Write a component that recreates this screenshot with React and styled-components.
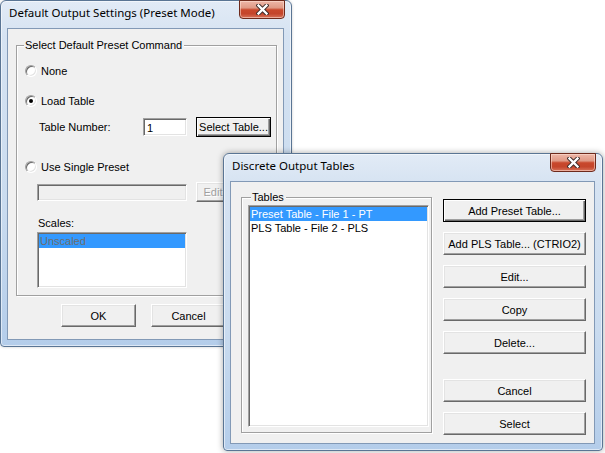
import styled, { createGlobalStyle } from "styled-components";

const GlobalStyle = createGlobalStyle`
  html, body {
    margin: 0;
    padding: 0;
    background: #ffffff;
  }
  body {
    width: 605px;
    height: 453px;
    overflow: hidden;
    font-family: "Liberation Sans", Arial, sans-serif;
    font-size: 11px;
    color: #000;
  }
`;

const Desktop = styled.div`
  position: relative;
  width: 605px;
  height: 453px;
  background: #ffffff;
  overflow: hidden;
`;

/* windows sit on a free desktop, so they are placed by coordinates */
const Window = styled.div`
  position: absolute;
  left: ${(p) => p.$left}px;
  top: ${(p) => p.$top}px;
  width: ${(p) => p.$w}px;
  height: ${(p) => p.$h}px;
  z-index: ${(p) => p.$z};
  box-sizing: border-box;
  display: flex;
  flex-direction: column;
  padding: 0 7px 6px 6px;
  border: 1px solid #5a7594;
  border-radius: 6px 6px 4px 4px;
  background: linear-gradient(
    180deg,
    #e2ebf6 0%,
    #d6e3f2 10%,
    #c9dbef 60%,
    #b4cdea 100%
  );
  box-shadow: inset 0 0 0 1px rgba(255, 255, 255, 0.55),
    ${(p) => (p.$active ? "0 0 6px rgba(0, 0, 0, 0.35)" : "0 0 3px rgba(0, 0, 0, 0.2)")};
`;

const TitleBar = styled.div`
  height: 27px;
  flex-shrink: 0;
  display: flex;
  align-items: flex-start;
  justify-content: space-between;
`;

const Title = styled.div`
  margin-top: 4px;
  padding-left: 2px;
  font-family: "Noto Sans", "Liberation Sans", sans-serif;
  font-size: 11.5px;
  line-height: 16px;
  color: #000;
  white-space: nowrap;
`;

const CloseButton = styled.div`
  box-sizing: border-box;
  width: 46px;
  height: 19px;
  margin-top: -1px;
  margin-right: -1px;
  display: flex;
  align-items: center;
  justify-content: center;
  border: 1px solid #6e2a1c;
  border-radius: 0 0 4px 4px;
  background: linear-gradient(
    180deg,
    #eeb7a8 0%,
    #e09a86 40%,
    #c9482c 52%,
    #c4452b 75%,
    #d8735a 100%
  );
  box-shadow: inset 0 0 0 1px rgba(255, 225, 215, 0.55);
`;

const CloseGlyph = () => (
  <svg width="13" height="11" viewBox="0 0 13 11">
    <path
      d="M2.5 1.5 L10.5 9.5 M10.5 1.5 L2.5 9.5"
      stroke="#3b2a28"
      strokeWidth="4.2"
      strokeLinecap="square"
      fill="none"
    />
    <path
      d="M2.5 1.5 L10.5 9.5 M10.5 1.5 L2.5 9.5"
      stroke="#ffffff"
      strokeWidth="2.4"
      strokeLinecap="square"
      fill="none"
    />
  </svg>
);

const Client = styled.div`
  flex: 1;
  display: flex;
  flex-direction: ${(p) => (p.$row ? "row" : "column")};
  align-items: flex-start;
  background: #f0f0f0;
  border: 1px solid #8299b6;
  overflow: hidden;
`;

const GroupBox = styled.div`
  position: relative;
  flex-shrink: 0;
  box-sizing: border-box;
  width: ${(p) => p.$w}px;
  height: ${(p) => p.$h}px;
  margin-left: ${(p) => p.$ml}px;
  margin-top: ${(p) => p.$mt}px;
  display: flex;
  flex-direction: column;
  border: 1px solid #a0a0a0;
  box-shadow: inset 1px 1px 0 #ffffff, 1px 1px 0 #ffffff;
`;

const Legend = styled.span`
  position: absolute;
  top: -7px;
  left: ${(p) => p.$left}px;
  padding: 0 2px 0 1px;
  line-height: 13px;
  background: #f0f0f0;
  white-space: nowrap;
`;

const Row = styled.div`
  display: flex;
  align-items: center;
  height: ${(p) => p.$h}px;
  margin-top: ${(p) => p.$mt}px;
  padding-left: ${(p) => p.$pl}px;
  white-space: nowrap;
`;

const RadioDot = styled.span`
  position: relative;
  flex-shrink: 0;
  box-sizing: border-box;
  width: 12px;
  height: 12px;
  margin-right: 4px;
  border-radius: 50%;
  border: 1px solid;
  border-color: #a0a0a0 #ffffff #ffffff #a0a0a0;
  background: #ffffff;
  box-shadow: inset 1px 1px 0 #696969, inset -1px -1px 0 #e3e3e3;

  &::after {
    content: "";
    display: ${(p) => (p.$checked ? "block" : "none")};
    position: absolute;
    left: 3px;
    top: 3px;
    width: 4px;
    height: 4px;
    border-radius: 50%;
    background: #000;
  }
`;

const FieldLabel = styled.span`
  width: ${(p) => p.$w}px;
  flex-shrink: 0;
`;

const TextBox = styled.input`
  box-sizing: border-box;
  flex-shrink: 0;
  width: ${(p) => p.$w}px;
  height: ${(p) => p.$h}px;
  margin: 0 9px 0 0;
  padding: 1px 0 0 3px;
  font: 11px "Liberation Sans", Arial, sans-serif;
  color: #000;
  background: ${(p) => (p.disabled ? "#f0f0f0" : "#ffffff")};
  border: 1px solid;
  border-color: #a0a0a0 #ffffff #ffffff #a0a0a0;
  box-shadow: inset 1px 1px 0 #696969, inset -1px -1px 0 #e3e3e3;
  outline: none;
`;

const PushButton = styled.button`
  box-sizing: border-box;
  flex-shrink: 0;
  width: ${(p) => p.$w}px;
  height: ${(p) => p.$h || 23}px;
  margin: 0;
  margin-top: ${(p) => p.$mt || 0}px;
  padding: 0;
  font: 11px "Liberation Sans", Arial, sans-serif;
  color: ${(p) => (p.disabled ? "#a0a0a0" : "#000")};
  text-shadow: ${(p) => (p.disabled ? "1px 1px 0 #ffffff" : "none")};
  background: #f0f0f0;
  border: 1px solid;
  border-color: ${(p) =>
    p.$default ? "#000000" : "#ffffff #696969 #696969 #ffffff"};
  box-shadow: ${(p) =>
    p.$default
      ? "inset 1px 1px 0 #ffffff, inset -1px -1px 0 #696969, inset -2px -2px 0 #a0a0a0"
      : "inset -1px -1px 0 #a0a0a0, inset 1px 1px 0 #e3e3e3"};
  white-space: nowrap;
`;

const ListBox = styled.div`
  box-sizing: border-box;
  flex-shrink: 0;
  width: ${(p) => p.$w}px;
  height: ${(p) => p.$h}px;
  margin-left: ${(p) => p.$ml}px;
  margin-top: ${(p) => p.$mt}px;
  padding: 1px;
  background: #ffffff;
  border: 1px solid;
  border-color: #a0a0a0 #ffffff #ffffff #a0a0a0;
  box-shadow: inset 1px 1px 0 #696969, inset -1px -1px 0 #e3e3e3;
  overflow: hidden;
`;

const ListItem = styled.div`
  height: 14px;
  line-height: 14px;
  padding-left: 1px;
  white-space: nowrap;
  background: ${(p) => (p.$selected ? "#3399ff" : "transparent")};
  color: ${(p) => (p.$dim ? "#6d6d6d" : p.$selected ? "#ffffff" : "#000")};
`;

const ButtonRow = styled.div`
  display: flex;
  gap: 15px;
  margin-top: 8px;
  padding-left: 53px;
`;

const ButtonColumn = styled.div`
  display: flex;
  flex-direction: column;
  gap: 10px;
  margin-left: 11px;
  margin-top: 17px;
`;

export default function App() {
  return (
    <>
      <GlobalStyle />
      <Desktop>
        <Window $left={0} $top={0} $w={292} $h={347} $z={1}>
          <TitleBar>
            <Title>Default Output Settings (Preset Mode)</Title>
            <CloseButton>
              <CloseGlyph />
            </CloseButton>
          </TitleBar>
          <Client>
            <GroupBox $w={261} $h={251} $ml={8} $mt={16}>
              <Legend $left={7}>Select Default Preset Command</Legend>
              <Row $h={14} $mt={18} $pl={8}>
                <RadioDot />
                None
              </Row>
              <Row $h={14} $mt={16} $pl={8}>
                <RadioDot $checked />
                Load Table
              </Row>
              <Row $h={20} $mt={9} $pl={22}>
                <FieldLabel $w={104}>Table Number:</FieldLabel>
                <TextBox $w={44} $h={18} readOnly defaultValue="1" />
                <PushButton $w={75} $h={20} $default>
                  Select Table...
                </PushButton>
              </Row>
              <Row $h={14} $mt={23} $pl={8}>
                <RadioDot />
                Use Single Preset
              </Row>
              <Row $h={20} $mt={8} $pl={20}>
                <TextBox $w={150} $h={17} disabled readOnly />
                <PushButton $w={34} $h={20} disabled>
                  Edit
                </PushButton>
              </Row>
              <Row $h={14} $mt={14} $pl={21}>
                Scales:
              </Row>
              <ListBox $w={150} $h={56} $ml={20} $mt={2}>
                <ListItem $selected $dim>
                  Unscaled
                </ListItem>
              </ListBox>
            </GroupBox>
            <ButtonRow>
              <PushButton $w={75}>OK</PushButton>
              <PushButton $w={75}>Cancel</PushButton>
            </ButtonRow>
          </Client>
        </Window>

        <Window $left={223} $top={153} $w={380} $h={298} $z={2} $active>
          <TitleBar>
            <Title>Discrete Output Tables</Title>
            <CloseButton>
              <CloseGlyph />
            </CloseButton>
          </TitleBar>
          <Client $row>
            <GroupBox $w={191} $h={236} $ml={10} $mt={15}>
              <Legend $left={9}>Tables</Legend>
              <ListBox $w={181} $h={222} $ml={6} $mt={7}>
                <ListItem $selected>Preset Table - File 1 - PT</ListItem>
                <ListItem>PLS Table - File 2 - PLS</ListItem>
              </ListBox>
            </GroupBox>
            <ButtonColumn>
              <PushButton $w={143} $default>
                Add Preset Table...
              </PushButton>
              <PushButton $w={143}>Add PLS Table... (CTRIO2)</PushButton>
              <PushButton $w={143}>Edit...</PushButton>
              <PushButton $w={143}>Copy</PushButton>
              <PushButton $w={143}>Delete...</PushButton>
              <PushButton $w={143} $mt={15}>
                Cancel
              </PushButton>
              <PushButton $w={143}>Select</PushButton>
            </ButtonColumn>
          </Client>
        </Window>
      </Desktop>
    </>
  );
}
